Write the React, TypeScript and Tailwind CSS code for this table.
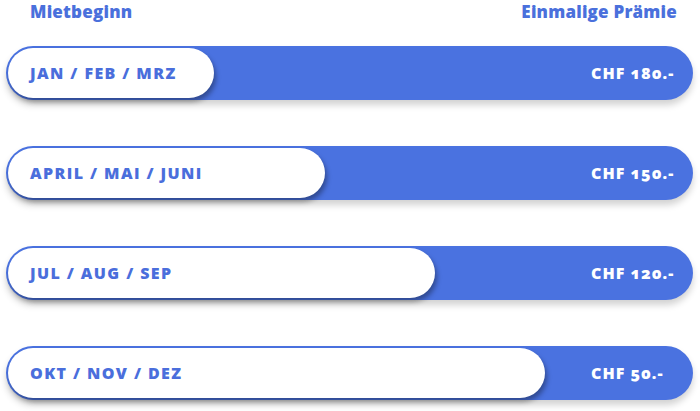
const rows = [
  { months: 'JAN / FEB / MRZ', price: 'CHF 180.-', pill: 'w-[206px]' },
  { months: 'APRIL / MAI / JUNI', price: 'CHF 150.-', pill: 'w-[317px]' },
  { months: 'JUL / AUG / SEP', price: 'CHF 120.-', pill: 'w-[427px]' },
  { months: 'OKT / NOV / DEZ', price: 'CHF 50.-', pill: 'w-[537px]' },
]

export default function App() {
  return (
    <div className="w-[700px] h-[411px] bg-white pt-[2px] pl-[6px] pr-[7px] font-['Open_Sans','Liberation_Sans',sans-serif] overflow-hidden">
      <div className="flex justify-between items-center h-[20px] mb-[24px] pl-[24px] pr-[16px] text-[17px] font-extrabold text-[#4a70dc] tracking-[0.2px] leading-[20px]">
        <span>Mietbeginn</span>
        <span>Einmalige Prämie</span>
      </div>

      <div className="flex flex-col gap-[46px]">
        {rows.map((r) => (
          <div
            key={r.months}
            className="flex items-center justify-between h-[54px] rounded-full bg-[#4a72e0] p-[2px] shadow-[0_5px_7px_rgba(0,0,0,0.18)]"
          >
            <div
              className={`${r.pill} h-full flex items-center pl-[22px] rounded-full bg-white shadow-[2px_4px_5px_rgba(0,0,0,0.35)]`}
            >
              <span className="text-[16px] font-extrabold text-[#4a6edc] tracking-[1.4px] oldstyle-nums">
                {r.months}
              </span>
            </div>
            <span className="w-[100px] shrink-0 text-[16px] font-extrabold text-white tracking-[1px] oldstyle-nums">
              {r.price}
            </span>
          </div>
        ))}
      </div>
    </div>
  )
}
